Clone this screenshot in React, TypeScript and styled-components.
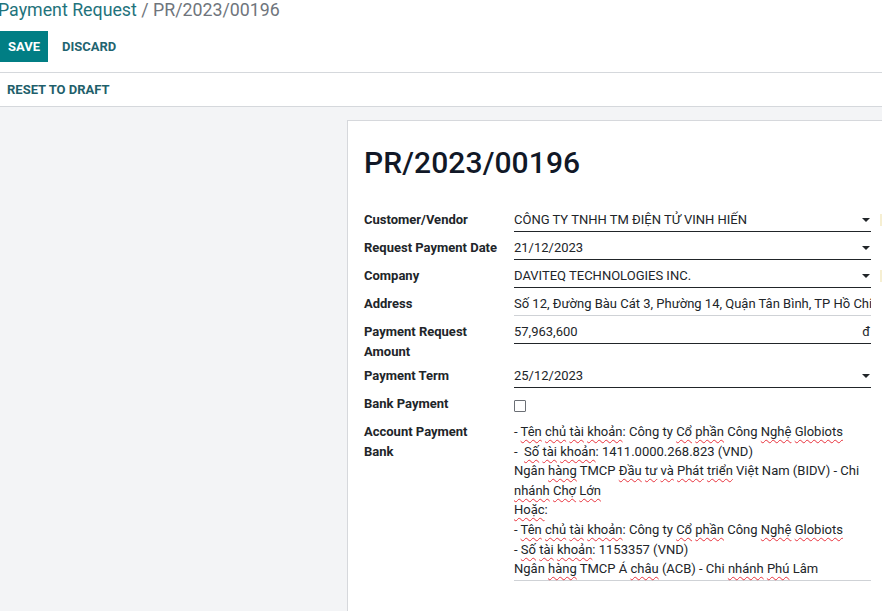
import React from "react";
import styled, { createGlobalStyle } from "styled-components";

const GlobalStyle = createGlobalStyle`
  html, body {
    margin: 0;
    padding: 0;
    background: #ffffff;
    overflow: hidden;
  }
  body {
    font-family: Roboto, "Noto Sans", "Liberation Sans", sans-serif;
    color: #212529;
    font-size: 13px;
  }
  * { box-sizing: border-box; }
`;

const Page = styled.div`
  width: 882px;
  height: 611px;
  display: flex;
  flex-direction: column;
  overflow: hidden;
`;

const ControlPanel = styled.div`
  padding: 0 0 10px 0;
  border-bottom: 1px solid #d5d8dc;
  background: #fff;
`;

const Breadcrumb = styled.div`
  font-size: 17.8px;
  line-height: 20px;
  margin-left: -2px;
  white-space: nowrap;
`;

const CrumbLink = styled.span`
  color: #1f737c;
`;

const CrumbActive = styled.span`
  color: #6f757c;
`;

const ButtonRow = styled.div`
  display: flex;
  gap: 6px;
  margin-top: 11px;
`;

const Button = styled.button<{ $primary?: boolean }>`
  height: 31px;
  padding: 0 8px;
  border: none;
  border-radius: 0;
  font-family: Roboto, "Liberation Sans", sans-serif;
  font-size: 13px;
  font-weight: 700;
  text-transform: uppercase;
  background: ${(p) => (p.$primary ? "#017e84" : "transparent")};
  color: ${(p) => (p.$primary ? "#ffffff" : "#1f6470")};
  cursor: pointer;
`;

const StatusBar = styled.div`
  height: 34px;
  display: flex;
  align-items: center;
  border-bottom: 1px solid #d5d8dc;
  background: #fff;
`;

const StatusButton = styled.button`
  border: none;
  background: transparent;
  padding: 0 7px;
  font-family: Roboto, "Liberation Sans", sans-serif;
  font-size: 13px;
  font-weight: 700;
  color: #1f5f6b;
  text-transform: uppercase;
  line-height: 20px;
  cursor: pointer;
`;

const Content = styled.div`
  flex: 1;
  background: #f3f4f6;
  padding: 13px 0 0 347px;
  overflow: hidden;
`;

const Sheet = styled.div`
  width: 620px;
  min-height: 520px;
  background: #ffffff;
  border: 1px solid #d6d8dc;
  padding: 24px 16px;
`;

const Title = styled.h1`
  margin: 0 0 29px 0;
  font-size: 30px;
  line-height: 36px;
  font-weight: 500;
  color: #111827;
  letter-spacing: 0.1px;
`;

const Grid = styled.div`
  display: grid;
  grid-template-columns: 150px 1fr;
  align-items: start;
`;

const Label = styled.div`
  font-weight: 700;
  font-size: 13px;
  line-height: 20px;
  padding-bottom: 4px;
  padding-right: 14px;
  color: #212529;
`;

const ValueCell = styled.div`
  display: flex;
  align-items: flex-start;
  gap: 9px;
  margin-bottom: 6px;
`;

const Field = styled.div<{ $muted?: boolean; $plain?: boolean }>`
  width: 357px;
  flex: none;
  display: flex;
  align-items: center;
  justify-content: space-between;
  min-height: 22px;
  line-height: 20px;
  padding-bottom: 1px;
  border-bottom: 1px solid
    ${(p) => (p.$plain ? "transparent" : p.$muted ? "#cfd2d6" : "#212529")};
  color: #212529;
  white-space: nowrap;
  overflow: hidden;
`;

const TextBlock = styled.div`
  width: 357px;
  flex: none;
  line-height: 19.6px;
  padding-bottom: 1px;
  border-bottom: 1px solid #cfd2d6;
  white-space: pre-wrap;
  color: #212529;
`;

const Caret = styled.span`
  width: 0;
  height: 0;
  margin-right: 1px;
  border-left: 4px solid transparent;
  border-right: 4px solid transparent;
  border-top: 4px solid #212529;
  flex: none;
`;

const Currency = styled.span`
  color: #212529;
  margin-right: 1px;
`;

const ExternalButton = styled.span`
  width: 12px;
  height: 12px;
  margin-top: 4px;
  background: #f6efd2;
  flex: none;
`;

const Checkbox = styled.span`
  display: inline-block;
  width: 12px;
  height: 12px;
  margin-top: 4px;
  border: 1px solid #6b6f75;
  border-radius: 1px;
  background: #fff;
`;

const Misspelled = styled.span`
  text-decoration-line: underline;
  text-decoration-style: wavy;
  text-decoration-color: #e8323c;
  text-decoration-thickness: 1px;
  text-underline-offset: 3px;
`;

function Spell({ text }: { text: string }) {
  const parts = text.split(/(\[[^\]]+\])/g).filter((s) => s.length > 0);
  return (
    <>
      {parts.map((p, i) =>
        p.startsWith("[") ? (
          <Misspelled key={i}>{p.slice(1, -1)}</Misspelled>
        ) : (
          <React.Fragment key={i}>{p}</React.Fragment>
        )
      )}
    </>
  );
}

const bankLines = [
  "- [Tên] [chủ] [tài] [khoản]: Công ty [Cổ] [phần] Công [Nghệ] [Globiots]",
  "-  [Số] [tài] [khoản]: 1411.0000.268.823 (VND)",
  "Ngân [hàng] TMCP [Đầu] [tư] [và] [Phát] [triển] Việt Nam (BIDV) - Chi [nhánh] [Chợ] [Lớn]",
  "[Hoặc]:",
  "- [Tên] [chủ] [tài] [khoản]: Công ty [Cổ] [phần] Công [Nghệ] [Globiots]",
  "- [Số] [tài] [khoản]: 1153357 (VND)",
  "Ngân [hàng] TMCP Á [châu] (ACB) - Chi [nhánh] [Phú] Lâm",
];

export default function App() {
  return (
    <Page>
      <GlobalStyle />
      <ControlPanel>
        <Breadcrumb>
          <CrumbLink>Payment Request</CrumbLink>
          <CrumbActive> / PR/2023/00196</CrumbActive>
        </Breadcrumb>
        <ButtonRow>
          <Button $primary>Save</Button>
          <Button>Discard</Button>
        </ButtonRow>
      </ControlPanel>
      <StatusBar>
        <StatusButton>Reset to Draft</StatusButton>
      </StatusBar>
      <Content>
        <Sheet>
          <Title>PR/2023/00196</Title>
          <Grid>
            <Label>Customer/Vendor</Label>
            <ValueCell>
              <Field>
                <span>CÔNG TY TNHH TM ĐIỆN TỬ VINH HIẾN</span>
                <Caret />
              </Field>
              <ExternalButton />
            </ValueCell>

            <Label>Request Payment Date</Label>
            <ValueCell>
              <Field>
                <span>21/12/2023</span>
                <Caret />
              </Field>
            </ValueCell>

            <Label>Company</Label>
            <ValueCell>
              <Field>
                <span>DAVITEQ TECHNOLOGIES INC.</span>
                <Caret />
              </Field>
              <ExternalButton />
            </ValueCell>

            <Label>Address</Label>
            <ValueCell>
              <Field $muted>
                <span>Số 12, Đường Bàu Cát 3, Phường 14, Quận Tân Bình, TP Hồ Chí Minh</span>
              </Field>
            </ValueCell>

            <Label>Payment Request Amount</Label>
            <ValueCell>
              <Field>
                <span>57,963,600</span>
                <Currency>đ</Currency>
              </Field>
            </ValueCell>

            <Label>Payment Term</Label>
            <ValueCell>
              <Field>
                <span>25/12/2023</span>
                <Caret />
              </Field>
            </ValueCell>

            <Label>Bank Payment</Label>
            <ValueCell>
              <Field $plain>
                <Checkbox />
              </Field>
            </ValueCell>

            <Label>Account Payment Bank</Label>
            <ValueCell>
              <TextBlock>
                {bankLines.map((l, i) => (
                  <div key={i}>
                    <Spell text={l} />
                  </div>
                ))}
              </TextBlock>
            </ValueCell>
          </Grid>
        </Sheet>
      </Content>
    </Page>
  );
}
